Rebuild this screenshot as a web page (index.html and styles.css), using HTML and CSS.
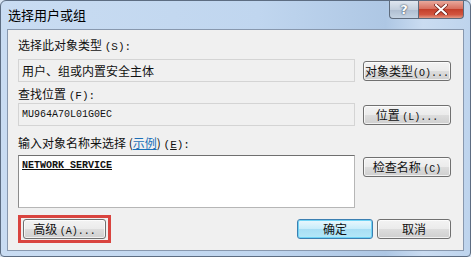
FILE: index.html
```html
<!DOCTYPE html>
<html>
<head>
    <meta charset="UTF-8">
    <title>选择用户或组</title>
    <link rel="stylesheet" href="styles.css">
</head>
<body>
    <div class="window">
        <div class="titlebar">
            <div class="title">选择用户或组</div>
            <div class="caption-buttons">
                <div class="cap-btn help">?</div>
                <div class="cap-btn close">
                    <svg width="14" height="11" viewBox="0 0 14 11">
                        <path d="M2 1 L12 10 M12 1 L2 10" stroke="#6a1c14" stroke-width="3.6" stroke-linecap="round"/>
                        <path d="M2 1 L12 10 M12 1 L2 10" stroke="#fff" stroke-width="2.2" stroke-linecap="round"/>
                    </svg>
                </div>
            </div>
        </div>

        <div class="panel">
            <div class="label">选择此对象类型 <span class="lat">(S):</span></div>
            <div class="row">
                <div class="field readonly">用户、组或内置安全主体</div>
                <button class="btn">对象类型<span class="lat">(O)...</span></button>
            </div>

            <div class="label second">查找位置 <span class="lat">(F):</span></div>
            <div class="row">
                <div class="field readonly mono">MU964A70L01G0EC</div>
                <button class="btn">位置 <span class="lat">(L)...</span></button>
            </div>

            <div class="label third">输入对象名称来选择 (<a class="link">示例</a>) <span class="lat">(<u>E</u>):</span></div>
            <div class="row top">
                <div class="field editor mono"><u><b>NETWORK SERVICE</b></u></div>
                <button class="btn">检查名称 <span class="lat">(C)</span></button>
            </div>

            <div class="footer">
                <div class="highlight">
                    <button class="btn advanced">高级 <span class="lat">(A)...</span></button>
                </div>
                <div class="actions">
                    <button class="btn default ok">确定</button>
                    <button class="btn cancel">取消</button>
                </div>
            </div>
        </div>
    </div>
</body>
</html>
```

FILE: styles.css
```css
body {
    margin: 0;
    width: 471px;
    height: 257px;
    overflow: hidden;
    font-family: "Noto Sans CJK SC", "DejaVu Sans", sans-serif;
    font-size: 12px;
    color: #111;
    background: #d7e4f3;
}
.window {
    box-sizing: border-box;
    width: 471px;
    height: 257px;
    border: 1px solid #5d6d82;
    border-radius: 6px 6px 4px 4px;
    background: linear-gradient(90deg, #c9dcf2 0%, #c0d6ef 55%, #aec7e4 82%, #cadcf1 90%, #bed4ed 100%);
    display: flex;
    flex-direction: column;
}
.titlebar {
    height: 28px;
    display: flex;
    justify-content: space-between;
    align-items: flex-start;
    flex-shrink: 0;
}
.title {
    padding: 5px 0 0 7px;
    font-size: 13px;
    line-height: 17px;
    color: #000;
}
.caption-buttons {
    display: flex;
    margin-right: 6px;
}
.cap-btn {
    height: 18px;
    box-sizing: border-box;
    border: 1px solid #5e6b7c;
    border-top: none;
    display: flex;
    align-items: center;
    justify-content: center;
}
.help {
    width: 29px;
    border-radius: 0 0 0 4px;
    border-right: none;
    background: linear-gradient(#dfe6ef 0%, #c3cfdd 50%, #aebdd0 51%, #c4d2e2 100%);
    font-family: "DejaVu Sans", sans-serif;
    font-weight: bold;
    font-size: 13px;
    color: #fff;
    text-shadow: 0 0 2px #3b4a5e, 0 0 1px #3b4a5e;
}
.close {
    width: 46px;
    border-radius: 0 0 4px 0;
    background: linear-gradient(#e9a99c 0%, #d8705f 45%, #c4402b 50%, #d2553f 80%, #e39a85 100%);
}
.panel {
    flex: 1;
    margin: 0 6px 5px 6px;
    border: 1px solid #8898ae;
    background: #f0f0f0;
    padding: 7px 12px 0 10px;
}
.label {
    height: 16px;
    line-height: 16px;
    margin-bottom: 6px;
    white-space: nowrap;
}
.label.second {
    margin-top: 4px;
    margin-bottom: 1px;
}
.label.third {
    margin-top: 9px;
    margin-bottom: 4px;
}
.lat {
    font-family: "Liberation Mono", monospace;
    font-size: 11px;
}
.btn .lat {
    font-size: 10px;
}
.link {
    color: #1a6fb8;
    text-decoration: underline;
}
.row {
    display: grid;
    grid-template-columns: 337px 88px;
    column-gap: 8px;
    align-items: center;
}
.row.top {
    align-items: start;
}
.field {
    box-sizing: border-box;
    height: 23px;
    line-height: 21px;
    padding-left: 3px;
    white-space: nowrap;
}
.readonly {
    border: 1px solid #d4d4d4;
    background: #f0f0f0;
}
.editor {
    height: 53px;
    background: #fff;
    border: 1px solid #b6b6b6;
    border-top-color: #6f6f6f;
    border-left-color: #8c8c8c;
    line-height: 14px;
    padding-top: 3px;
}
.mono {
    font-family: "Liberation Mono", monospace;
    font-size: 10px;
}
.btn {
    box-sizing: border-box;
    height: 20px;
    padding: 0;
    border: 1px solid #707070;
    border-radius: 3px;
    background: linear-gradient(#f3f3f3 0%, #ebebeb 50%, #dddddd 51%, #cfcfcf 100%);
    font-family: "Noto Sans CJK SC", "DejaVu Sans", sans-serif;
    font-size: 12px;
    line-height: 18px;
    color: #111;
    white-space: nowrap;
    box-shadow: inset 0 0 0 1px rgba(255, 255, 255, 0.7);
}
.row.top .btn {
    margin-top: 2px;
}
.footer {
    margin-top: 7px;
    display: flex;
    justify-content: space-between;
    align-items: center;
}
.highlight {
    width: 93px;
    height: 28px;
    box-sizing: border-box;
    border: 3px solid #d9443f;
    display: flex;
    align-items: center;
    justify-content: center;
}
.advanced {
    width: 83px;
}
.actions {
    display: flex;
    gap: 4px;
}
.ok {
    width: 76px;
}
.cancel {
    width: 74px;
}
.default {
    border-color: #3c7fb1;
    background: linear-gradient(#eaf8fd 0%, #c7ecfa 50%, #a8def4 51%, #b4e8f8 100%);
    box-shadow: inset 0 0 0 1px #6fd3f5;
}
```
